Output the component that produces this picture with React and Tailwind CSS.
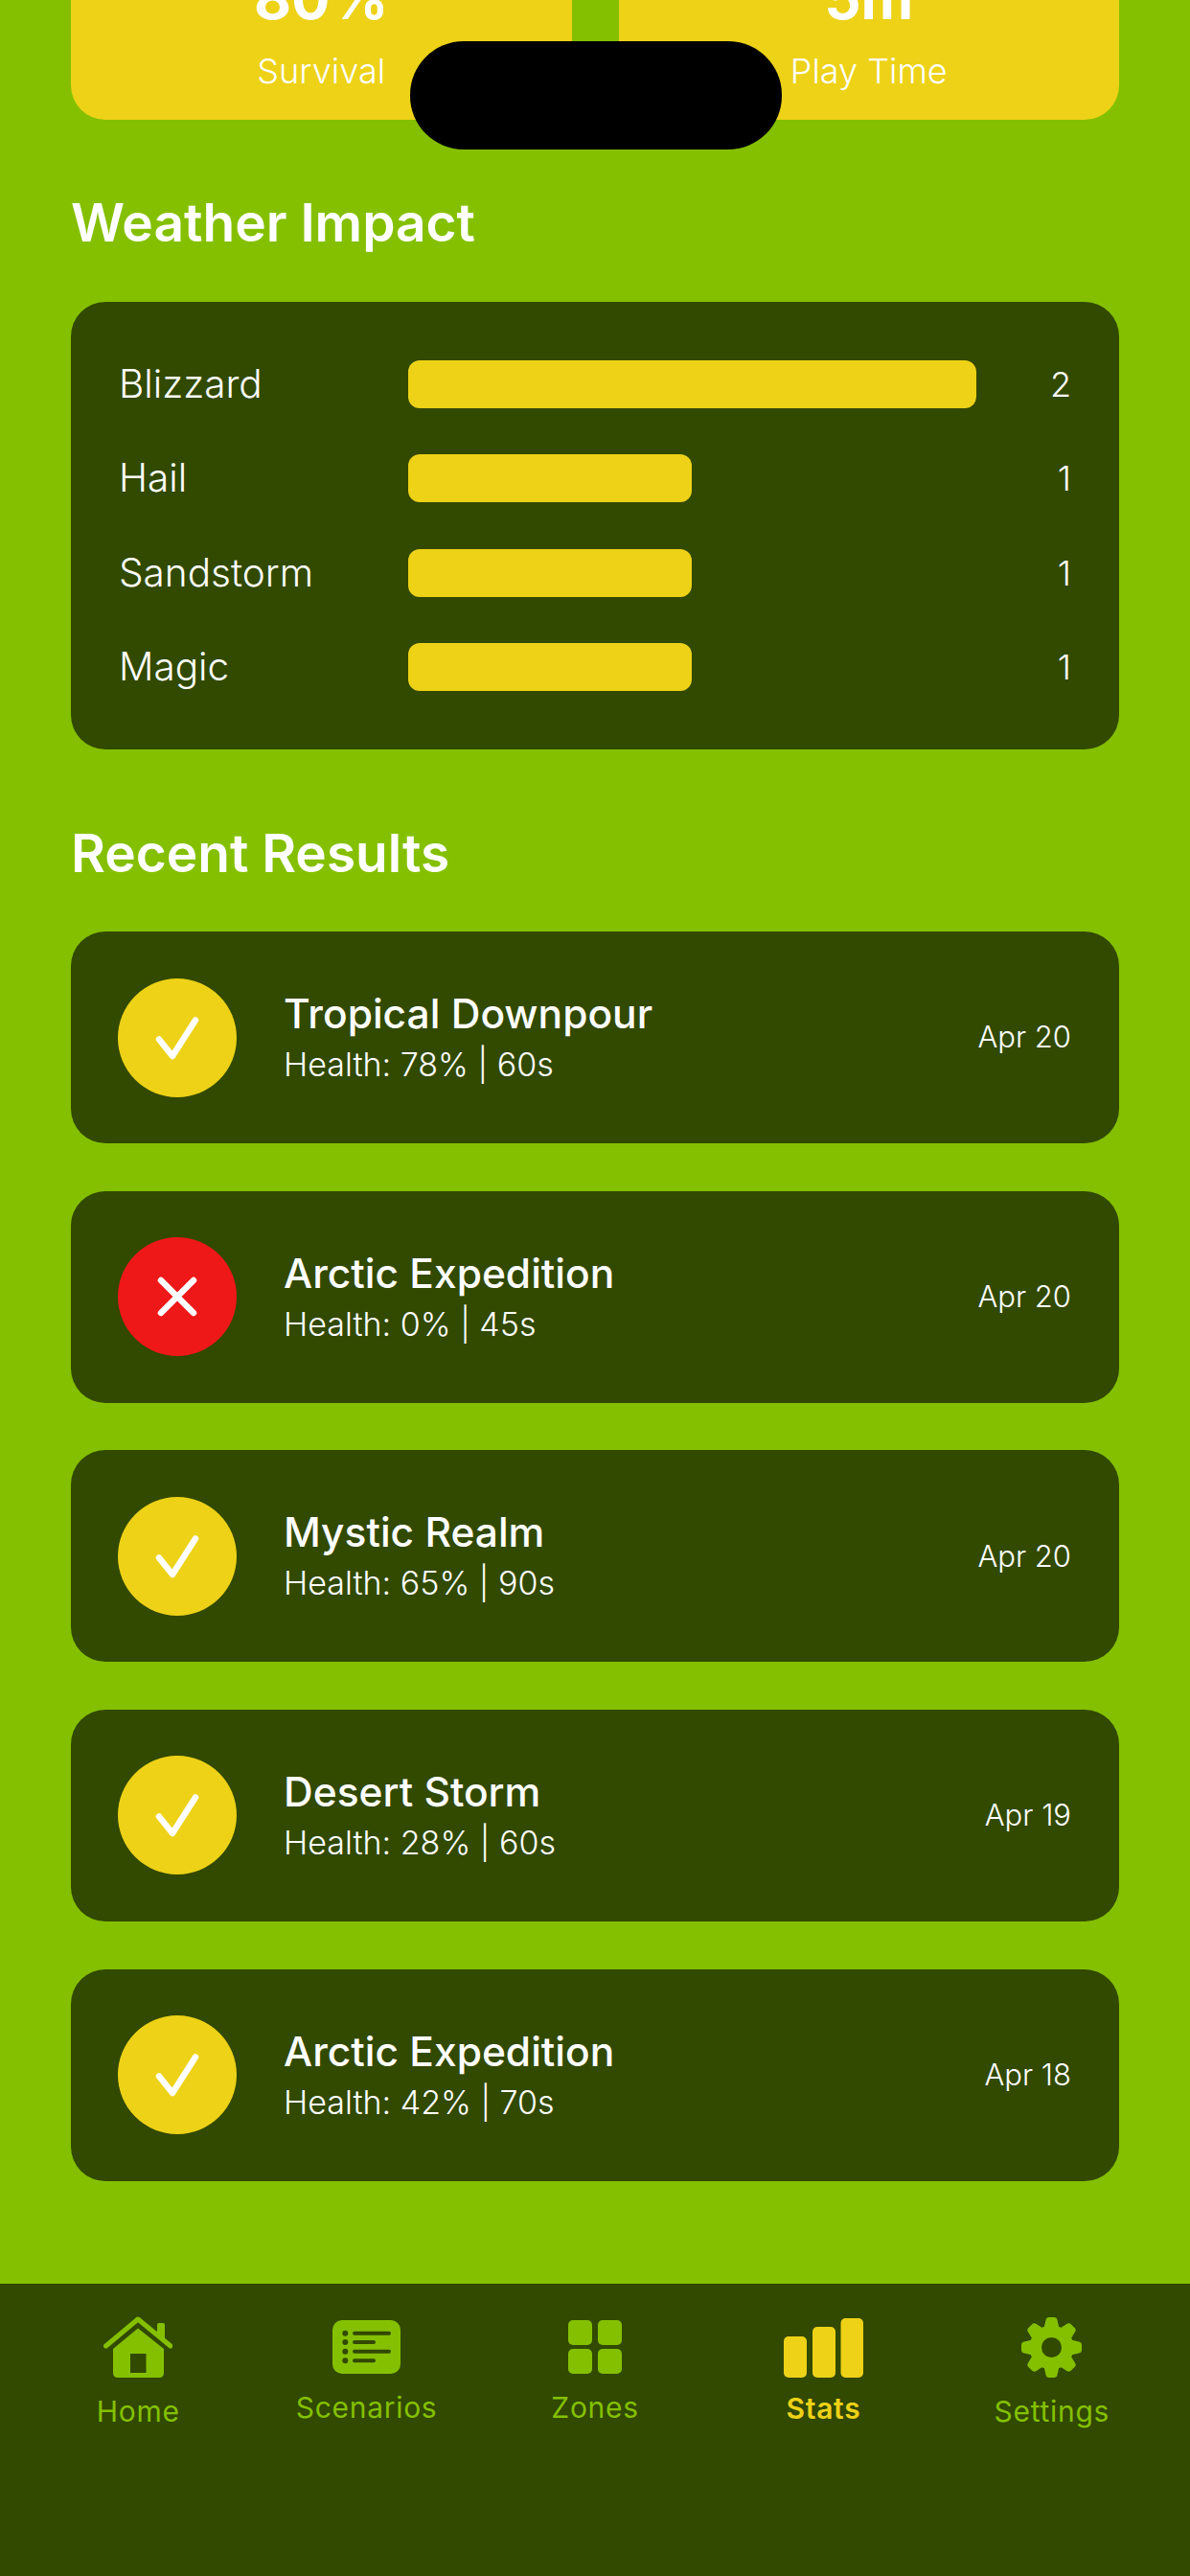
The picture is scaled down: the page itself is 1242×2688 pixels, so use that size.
const stats = [
  { value: '80%', label: 'Survival' },
  { value: '5m', label: 'Play Time' },
];

const weather = [
  { name: 'Blizzard', count: 2, full: true },
  { name: 'Hail', count: 1 },
  { name: 'Sandstorm', count: 1 },
  { name: 'Magic', count: 1 },
];

const results = [
  { title: 'Tropical Downpour', sub: 'Health: 78% | 60s', date: 'Apr 20', ok: true },
  { title: 'Arctic Expedition', sub: 'Health: 0% | 45s', date: 'Apr 20', ok: false },
  { title: 'Mystic Realm', sub: 'Health: 65% | 90s', date: 'Apr 20', ok: true },
  { title: 'Desert Storm', sub: 'Health: 28% | 60s', date: 'Apr 19', ok: true },
  { title: 'Arctic Expedition', sub: 'Health: 42% | 70s', date: 'Apr 18', ok: true },
];

function HomeIcon() {
  return (
    <svg width="72" height="64" viewBox="0 0 72 64" fill="#84c000">
      <path d="M2.5 31 L36 3 L70 31" fill="none" stroke="#84c000" strokeWidth="5" strokeLinecap="round" strokeLinejoin="round" />
      <path d="M56 9 Q56 7 58 7 H62 Q64 7 64 9 V26 L56 19 Z" />
      <path fillRule="evenodd" d="M36 12.5 L63 34 V59 Q63 64 58 64 H15 Q10 64 10 59 V34 Z M28 39 V59 H44.5 V39 Z" />
    </svg>
  );
}

function ListIcon() {
  return (
    <svg width="71" height="56" viewBox="0 0 71 56">
      <rect width="71" height="56" rx="10" fill="#84c000" />
      <g fill="#324900">
        <circle cx="13.3" cy="13.7" r="3" />
        <circle cx="13.3" cy="23" r="3" />
        <circle cx="13.3" cy="32.7" r="3" />
        <circle cx="13.3" cy="42.3" r="3" />
        <rect x="21" y="11.7" width="40" height="4" rx="2" />
        <rect x="21" y="21" width="24" height="4" rx="2" />
        <rect x="21" y="30.7" width="40" height="4" rx="2" />
        <rect x="21" y="40.3" width="24" height="4" rx="2" />
      </g>
    </svg>
  );
}

function GridIcon() {
  return (
    <svg width="56" height="56" viewBox="0 0 56 56" fill="#84c000">
      <rect width="25" height="26" rx="5" />
      <rect x="31" width="25" height="26" rx="5" />
      <rect y="30" width="25" height="26" rx="5" />
      <rect x="31" y="30" width="25" height="26" rx="5" />
    </svg>
  );
}

function BarsIcon() {
  return (
    <svg width="83" height="62" viewBox="0 0 83 62" fill="#edd217">
      <rect y="19" width="24" height="43" rx="5" />
      <rect x="30" y="9" width="24" height="53" rx="5" />
      <rect x="59.5" width="23.5" height="62" rx="5" />
    </svg>
  );
}

function GearIcon() {
  const teeth = [0, 45, 90, 135, 180, 225, 270, 315];
  return (
    <svg width="63" height="63" viewBox="0 0 63 63" fill="#84c000">
      <g transform="translate(31.5 31.5)">
        {teeth.map((deg) => (
          <path key={deg} transform={`rotate(${deg})`} d="M-8 -20 L-6 -28.5 Q-5.5 -31.5 -2.5 -31.5 H2.5 Q5.5 -31.5 6 -28.5 L8 -20 Z" />
        ))}
        <path fillRule="evenodd" d="M0 -23 A23 23 0 1 1 0 23 A23 23 0 1 1 0 -23 Z M0 -10.5 A10.5 10.5 0 1 0 0 10.5 A10.5 10.5 0 1 0 0 -10.5 Z" />
      </g>
    </svg>
  );
}

const tabs = [
  { label: 'Home', icon: <HomeIcon />, cls: 'text-[#84c000] pt-[34px]', gap: 'mt-[17px]' },
  { label: 'Scenarios', icon: <ListIcon />, cls: 'text-[#84c000] pt-[38px]', gap: 'mt-[17px]' },
  { label: 'Zones', icon: <GridIcon />, cls: 'text-[#84c000] pt-[38px]', gap: 'mt-[17px]' },
  { label: 'Stats', icon: <BarsIcon />, cls: 'text-[#edd217] font-semibold pt-[36px]', gap: 'mt-[14px]' },
  { label: 'Settings', icon: <GearIcon />, cls: 'text-[#84c000] pt-[35px]', gap: 'mt-[17px]' },
];

export default function App() {
  return (
    <div className="relative h-[2688px] w-[1242px] overflow-hidden bg-[#84c000] font-['Inter',sans-serif] text-white">
      <div className="absolute left-[428px] top-[43px] z-20 h-[113px] w-[388px] rounded-[56px] bg-black" />

      <div className="-mt-[80px] px-[74px]">
        <div className="flex gap-[49px]">
          {stats.map((s) => (
            <div key={s.label} className="flex h-[205px] flex-1 flex-col items-center justify-end rounded-[36px] bg-[#edd217] pb-[29px]">
              <div className="text-[60px] font-bold leading-[72px]">{s.value}</div>
              <div className="mt-[18px] text-[36px] font-light leading-[44px]">{s.label}</div>
            </div>
          ))}
        </div>

        <h2 className="mt-[74px] text-[55px] font-semibold leading-[66px]">Weather Impact</h2>
        <div className="mt-[50px] flex flex-col gap-[48.4px] rounded-[36px] bg-[#324900] px-[50px] py-[61px]">
          {weather.map((w) => (
            <div key={w.name} className="flex h-[50px] items-center">
              <div className="w-[302px] text-[40.5px] font-light leading-[50px]">{w.name}</div>
              <div className="flex-1">
                <div className={`h-[50px] rounded-[12px] bg-[#edd217] ${w.full ? 'w-[593px]' : 'w-[296px]'}`} />
              </div>
              <div className="text-[36px] font-light">{w.count}</div>
            </div>
          ))}
        </div>

        <h2 className="mt-[75px] text-[55px] font-semibold leading-[66px]">Recent Results</h2>
        <div className="mt-[49px] flex flex-col gap-[49.6px]">
          {results.map((r, i) => (
            <div key={i} className="flex h-[221px] items-center rounded-[36px] bg-[#324900] pl-[49px] pr-[50px]">
              <div className={`flex h-[124px] w-[124px] shrink-0 items-center justify-center rounded-full ${r.ok ? 'bg-[#edd217]' : 'bg-[#ee1818]'}`}>
                {r.ok ? (
                  <svg width="50" height="50" viewBox="0 0 50 50" fill="none" stroke="#fff" strokeWidth="6.5" strokeLinecap="round" strokeLinejoin="round">
                    <path d="M6 26.5 L20 44 L44 6.5" />
                  </svg>
                ) : (
                  <svg width="44" height="44" viewBox="0 0 44 44" fill="none" stroke="#fff" strokeWidth="6.5" strokeLinecap="round">
                    <path d="M5 5 L39 39 M39 5 L5 39" />
                  </svg>
                )}
              </div>
              <div className="ml-[49px] flex-1">
                <div className="text-[42.5px] font-medium leading-[52px]">{r.title}</div>
                <div className="mt-[5px] text-[34px] font-light leading-[44px]">{r.sub}</div>
              </div>
              <div className="text-[31px] font-light">{r.date}</div>
            </div>
          ))}
        </div>
      </div>

      <div className="absolute bottom-0 left-0 z-10 flex h-[305px] w-full items-start bg-[#324900] px-[25px]">
        {tabs.map((t) => (
          <div key={t.label} className={`flex flex-1 flex-col items-center text-[30px] leading-[36px] tracking-[0.7px] ${t.cls}`}>
            {t.icon}
            <div className={t.gap}>{t.label}</div>
          </div>
        ))}
      </div>
    </div>
  );
}
